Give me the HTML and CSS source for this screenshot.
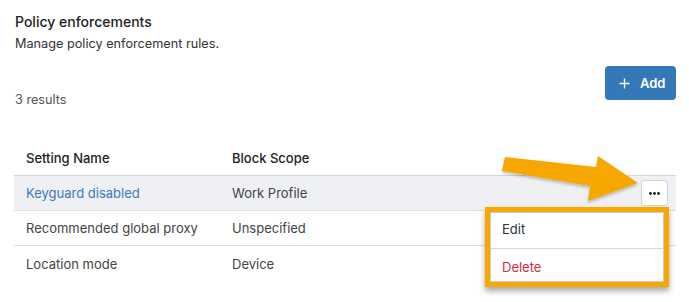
FILE: index.html
```html
<!DOCTYPE html>
<html>
<head>
<meta charset="utf-8">
<link rel="stylesheet" href="styles.css">
</head>
<body>
<div class="page">
  <h1 class="title">Policy enforcements</h1>
  <p class="subtitle">Manage policy enforcement rules.</p>
  <div class="toolbar">
    <span class="results">3 results</span>
    <button class="btn-add">
      <svg class="plus" width="11" height="11" viewBox="0 0 11 11"><path d="M5.5 0.5v10M0.5 5.5h10" stroke="#fff" stroke-width="1.3" fill="none"/></svg>
      <span>Add</span>
    </button>
  </div>
  <div class="table">
    <div class="row head">
      <div class="c1">Setting Name</div>
      <div class="c2">Block Scope</div>
      <div class="c3"></div>
    </div>
    <div class="row active">
      <div class="c1"><a class="link">Keyguard disabled</a></div>
      <div class="c2">Work Profile</div>
      <div class="c3">
        <button class="dots">
          <svg width="11" height="3" viewBox="0 0 11 3"><circle cx="1.5" cy="1.5" r="1.4" fill="#222"/><circle cx="5.5" cy="1.5" r="1.4" fill="#222"/><circle cx="9.5" cy="1.5" r="1.4" fill="#222"/></svg>
        </button>
      </div>
    </div>
    <div class="row">
      <div class="c1">Recommended global proxy</div>
      <div class="c2">Unspecified</div>
      <div class="c3"></div>
    </div>
    <div class="row last">
      <div class="c1">Location mode</div>
      <div class="c2">Device</div>
      <div class="c3"></div>
    </div>
  </div>

  <div class="menu-frame">
    <ul class="menu">
      <li class="item">Edit</li>
      <li class="item danger">Delete</li>
    </ul>
  </div>

  <svg class="arrow" width="689" height="302" viewBox="0 0 689 302">
    <defs>
      <filter id="sh" x="-10%" y="-10%" width="130%" height="140%">
        <feDropShadow dx="0" dy="2" stdDeviation="1.5" flood-color="#000" flood-opacity="0.25"/>
      </filter>
    </defs>
    <polygon points="505,157 596,167 598,156 638,183 588,201 590,186 502,171" fill="#f7a800" filter="url(#sh)"/>
  </svg>
</div>
</body>
</html>
```

FILE: styles.css
```css
html, body {
  margin: 0;
  padding: 0;
  background: #fff;
}
body {
  font-family: Inter, "Noto Sans", "Liberation Sans", sans-serif;
  color: #444;
}
.page {
  position: relative;
  width: 689px;
  height: 302px;
  box-sizing: border-box;
  padding: 12px 13px 0 14px;
  overflow: hidden;
}
.title {
  margin: 0 0 0 1px;
  font-size: 14px;
  font-weight: 500;
  line-height: 20px;
  color: #222;
}
.subtitle {
  margin: 3px 0 0 1px;
  font-size: 12.7px;
  line-height: 18px;
  color: #333;
}
.toolbar {
  margin-top: 13px;
  display: flex;
  justify-content: space-between;
  align-items: flex-start;
}
.results {
  padding-top: 25px;
  padding-left: 1px;
  font-size: 12.7px;
  line-height: 18px;
  color: #555;
}
.btn-add {
  display: flex;
  align-items: center;
  gap: 10px;
  height: 34px;
  width: 71px;
  box-sizing: border-box;
  padding: 0 0 0 14px;
  border: none;
  border-radius: 4px;
  background: #3478b7;
  color: #fff;
  font-family: inherit;
  font-size: 13px;
  font-weight: 600;
}
.plus { display: block; }
.table {
  margin-top: 31px;
}
.row {
  display: flex;
  align-items: center;
  height: 35px;
  box-sizing: border-box;
  border-bottom: 1px solid #dcdfe3;
  font-size: 13px;
  color: #444;
}
.row.head {
  height: 36px;
  color: #222;
  font-weight: 500;
  border-bottom-color: #d3d7dc;
}
.row.active {
  background: #eef0f3;
  height: 35px;
}
.row.last {
  border-bottom: none;
}
.c1 {
  width: 218px;
  padding-left: 12px;
  box-sizing: border-box;
}
.c2 {
  flex: 1;
}
.c3 {
  width: 40px;
  display: flex;
  justify-content: flex-end;
  padding-right: 8px;
  box-sizing: border-box;
}
.link {
  color: #3a7bbf;
}
.dots {
  width: 27px;
  height: 26px;
  padding: 0;
  border: 1px solid #cfd3d8;
  border-radius: 3px;
  background: #fff;
  display: flex;
  align-items: center;
  justify-content: center;
}
.dots svg { display: block; }
.menu-frame {
  position: absolute;
  left: 485px;
  top: 207px;
  width: 184px;
  height: 80px;
  box-sizing: border-box;
  border: 5px solid #f7a800;
  background: #fff;
  box-shadow: 0 4px 6px rgba(0, 0, 0, 0.35);
}
.menu {
  list-style: none;
  margin: 0;
  padding: 0;
  height: 100%;
  box-sizing: border-box;
  border: 1px solid #c9cdd2;
  display: flex;
  flex-direction: column;
}
.item {
  padding-left: 11px;
  font-size: 13px;
  color: #333;
  display: flex;
  align-items: center;
}
.item:first-child {
  height: 36px;
  box-sizing: border-box;
  padding-bottom: 3px;
  border-bottom: 1px solid #d6d9dd;
  color: #2d3140;
}
.item.danger {
  flex: 1;
  padding-top: 4px;
  color: #d02e3d;
}
.arrow {
  position: absolute;
  left: 0;
  top: 0;
  pointer-events: none;
}
```
